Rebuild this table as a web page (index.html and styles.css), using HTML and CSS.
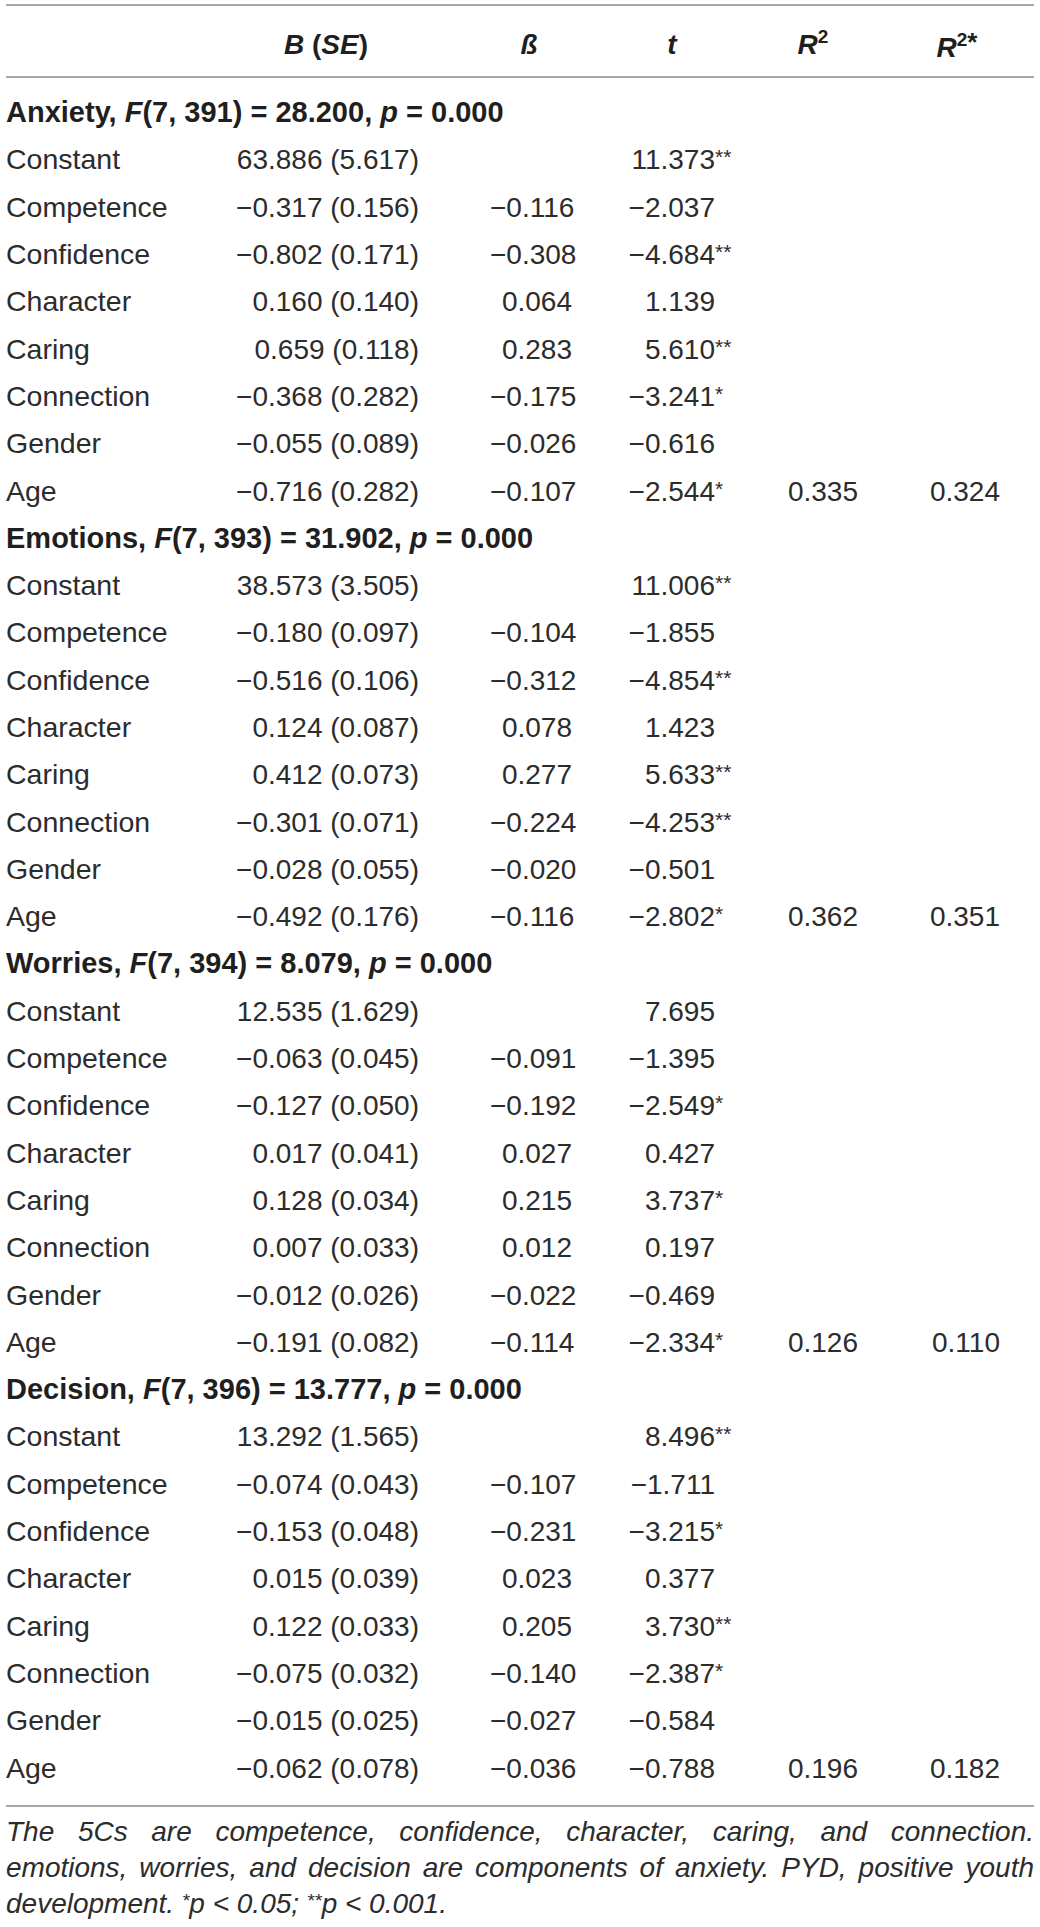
FILE: index.html
```html
<!DOCTYPE html>
<html lang="en">
<head>
  <meta charset="UTF-8" />
  <title>Regression – anxiety and the 5Cs</title>
  <link rel="stylesheet" href="styles.css">
</head>
<body>

  <div class="page">
    <!-- Tabla -->
    <div class="table-box">
      <table class="reg">
        <colgroup>
          <col class="c-label"><col class="c-b"><col class="c-beta"><col class="c-t"><col class="c-r2"><col class="c-r2a">
        </colgroup>
        <thead>
          <tr>
            <th></th>
            <th class="h-b"><i>B</i> (<i>SE</i>)</th>
            <th class="h-beta"><i>ß</i></th>
            <th class="h-t"><i>t</i></th>
            <th class="h-r2"><i>R</i><sup>2</sup></th>
            <th class="h-r2a"><i>R</i><sup>2</sup><span class="star">*</span></th>
          </tr>
        </thead>

        <!-- Anxiety -->
        <tbody>
          <tr class="sec"><td colspan="6">Anxiety, <i>F</i>(7, 391) = 28.200, <i>p</i> = 0.000</td></tr>
          <tr><td>Constant</td><td class="b">63.886 (5.617)</td><td class="beta"></td><td class="t">11.373<span class="sig">**</span></td><td></td><td></td></tr>
          <tr><td>Competence</td><td class="b">−0.317 (0.156)</td><td class="beta">−0.116</td><td class="t">−2.037<span class="sig"></span></td><td></td><td></td></tr>
          <tr><td>Confidence</td><td class="b">−0.802 (0.171)</td><td class="beta">−0.308</td><td class="t">−4.684<span class="sig">**</span></td><td></td><td></td></tr>
          <tr><td>Character</td><td class="b">0.160 (0.140)</td><td class="beta">0.064</td><td class="t">1.139<span class="sig"></span></td><td></td><td></td></tr>
          <tr><td>Caring</td><td class="b">0.659 (0.118)</td><td class="beta">0.283</td><td class="t">5.610<span class="sig">**</span></td><td></td><td></td></tr>
          <tr><td>Connection</td><td class="b">−0.368 (0.282)</td><td class="beta">−0.175</td><td class="t">−3.241<span class="sig">*</span></td><td></td><td></td></tr>
          <tr><td>Gender</td><td class="b">−0.055 (0.089)</td><td class="beta">−0.026</td><td class="t">−0.616<span class="sig"></span></td><td></td><td></td></tr>
          <tr><td>Age</td><td class="b">−0.716 (0.282)</td><td class="beta">−0.107</td><td class="t">−2.544<span class="sig">*</span></td><td class="r2">0.335</td><td class="r2a">0.324</td></tr>
        </tbody>

        <!-- Emotions -->
        <tbody>
          <tr class="sec"><td colspan="6">Emotions, <i>F</i>(7, 393) = 31.902, <i>p</i> = 0.000</td></tr>
          <tr><td>Constant</td><td class="b">38.573 (3.505)</td><td class="beta"></td><td class="t">11.006<span class="sig">**</span></td><td></td><td></td></tr>
          <tr><td>Competence</td><td class="b">−0.180 (0.097)</td><td class="beta">−0.104</td><td class="t">−1.855<span class="sig"></span></td><td></td><td></td></tr>
          <tr><td>Confidence</td><td class="b">−0.516 (0.106)</td><td class="beta">−0.312</td><td class="t">−4.854<span class="sig">**</span></td><td></td><td></td></tr>
          <tr><td>Character</td><td class="b">0.124 (0.087)</td><td class="beta">0.078</td><td class="t">1.423<span class="sig"></span></td><td></td><td></td></tr>
          <tr><td>Caring</td><td class="b">0.412 (0.073)</td><td class="beta">0.277</td><td class="t">5.633<span class="sig">**</span></td><td></td><td></td></tr>
          <tr><td>Connection</td><td class="b">−0.301 (0.071)</td><td class="beta">−0.224</td><td class="t">−4.253<span class="sig">**</span></td><td></td><td></td></tr>
          <tr><td>Gender</td><td class="b">−0.028 (0.055)</td><td class="beta">−0.020</td><td class="t">−0.501<span class="sig"></span></td><td></td><td></td></tr>
          <tr><td>Age</td><td class="b">−0.492 (0.176)</td><td class="beta">−0.116</td><td class="t">−2.802<span class="sig">*</span></td><td class="r2">0.362</td><td class="r2a">0.351</td></tr>
        </tbody>

        <!-- Worries -->
        <tbody>
          <tr class="sec"><td colspan="6">Worries, <i>F</i>(7, 394) = 8.079, <i>p</i> = 0.000</td></tr>
          <tr><td>Constant</td><td class="b">12.535 (1.629)</td><td class="beta"></td><td class="t">7.695<span class="sig"></span></td><td></td><td></td></tr>
          <tr><td>Competence</td><td class="b">−0.063 (0.045)</td><td class="beta">−0.091</td><td class="t">−1.395<span class="sig"></span></td><td></td><td></td></tr>
          <tr><td>Confidence</td><td class="b">−0.127 (0.050)</td><td class="beta">−0.192</td><td class="t">−2.549<span class="sig">*</span></td><td></td><td></td></tr>
          <tr><td>Character</td><td class="b">0.017 (0.041)</td><td class="beta">0.027</td><td class="t">0.427<span class="sig"></span></td><td></td><td></td></tr>
          <tr><td>Caring</td><td class="b">0.128 (0.034)</td><td class="beta">0.215</td><td class="t">3.737<span class="sig">*</span></td><td></td><td></td></tr>
          <tr><td>Connection</td><td class="b">0.007 (0.033)</td><td class="beta">0.012</td><td class="t">0.197<span class="sig"></span></td><td></td><td></td></tr>
          <tr><td>Gender</td><td class="b">−0.012 (0.026)</td><td class="beta">−0.022</td><td class="t">−0.469<span class="sig"></span></td><td></td><td></td></tr>
          <tr><td>Age</td><td class="b">−0.191 (0.082)</td><td class="beta">−0.114</td><td class="t">−2.334<span class="sig">*</span></td><td class="r2">0.126</td><td class="r2a">0.110</td></tr>
        </tbody>

        <!-- Decision -->
        <tbody>
          <tr class="sec"><td colspan="6">Decision, <i>F</i>(7, 396) = 13.777, <i>p</i> = 0.000</td></tr>
          <tr><td>Constant</td><td class="b">13.292 (1.565)</td><td class="beta"></td><td class="t">8.496<span class="sig">**</span></td><td></td><td></td></tr>
          <tr><td>Competence</td><td class="b">−0.074 (0.043)</td><td class="beta">−0.107</td><td class="t">−1.711<span class="sig"></span></td><td></td><td></td></tr>
          <tr><td>Confidence</td><td class="b">−0.153 (0.048)</td><td class="beta">−0.231</td><td class="t">−3.215<span class="sig">*</span></td><td></td><td></td></tr>
          <tr><td>Character</td><td class="b">0.015 (0.039)</td><td class="beta">0.023</td><td class="t">0.377<span class="sig"></span></td><td></td><td></td></tr>
          <tr><td>Caring</td><td class="b">0.122 (0.033)</td><td class="beta">0.205</td><td class="t">3.730<span class="sig">**</span></td><td></td><td></td></tr>
          <tr><td>Connection</td><td class="b">−0.075 (0.032)</td><td class="beta">−0.140</td><td class="t">−2.387<span class="sig">*</span></td><td></td><td></td></tr>
          <tr><td>Gender</td><td class="b">−0.015 (0.025)</td><td class="beta">−0.027</td><td class="t">−0.584<span class="sig"></span></td><td></td><td></td></tr>
          <tr><td>Age</td><td class="b">−0.062 (0.078)</td><td class="beta">−0.036</td><td class="t">−0.788<span class="sig"></span></td><td class="r2">0.196</td><td class="r2a">0.182</td></tr>
        </tbody>
      </table>
    </div>

    <!-- Nota -->
    <div class="note">
      <span class="line">The 5Cs are competence, confidence, character, caring, and connection.</span>
      <span class="line">emotions, worries, and decision are components of anxiety. PYD, positive youth</span>
      <span class="line last">development. <span class="sig-note">*</span>p &lt; 0.05; <span class="sig-note">**</span>p &lt; 0.001.</span>
    </div>
  </div>

</body>
</html>
```

FILE: styles.css
```css
body {
  margin: 0;
  background: #fff;
  color: #2c2c2c;
  font-family: "Liberation Sans", Arial, sans-serif;
}

.page {
  padding: 4px 6px 0 6px;
}

.table-box {
  border-top: 2px solid #a8a8a8;
  border-bottom: 2px solid #a8a8a8;
  padding-bottom: 13px;
}

.reg {
  width: 100%;
  border-collapse: collapse;
  table-layout: fixed;
  font-size: 28px;
}

.c-label { width: 219px; }
.c-b { width: 265px; }
.c-beta { width: 105px; }
.c-t { width: 165px; }
.c-r2 { width: 150px; }
.c-r2a { width: 124px; }

th, td {
  padding: 0;
  line-height: 31px;
  vertical-align: middle;
  white-space: nowrap;
}

/* Cabecera */
thead th {
  height: 63px;
  padding-top: 7px;
  font-weight: bold;
  color: #1f1f1f;
  text-align: center;
  border-bottom: 2px solid #a8a8a8;
}

thead sup {
  font-size: 19px;
  font-style: normal;
  vertical-align: 11px;
  line-height: 0;
}

thead .star {
  font-size: 26px;
  vertical-align: 6px;
}

.h-b { padding-right: 63px; }
.h-beta { padding-right: 27px; }
.h-t { padding-right: 11px; }
.h-r2 { padding-right: 44px; }
.h-r2a { padding-right: 30px; }

/* Filas */
tbody td {
  height: 47.3px;
}

tbody td:first-child {
  font-size: 28.5px;
}

tbody:first-of-type tr:first-child td {
  padding-top: 11px;
}

.sec td,
tbody .sec td:first-child {
  font-size: 29px;
  font-weight: bold;
  color: #1f1f1f;
}

.b { text-align: right; padding-right: 71px; }
.beta { text-align: right; padding-right: 23px; }
.t { text-align: right; padding-right: 25px; }
.r2 { text-align: right; padding-right: 52px; }
.r2a { text-align: right; padding-right: 34px; }

.sig {
  display: inline-block;
  width: 20px;
  text-align: left;
  font-size: 21px;
  vertical-align: 5px;
  line-height: 0;
}

/* Nota */
.note {
  padding-top: 7px;
  font-size: 28px;
  font-style: italic;
  line-height: 36px;
  color: #2c2c2c;
}

.note .line {
  display: block;
  text-align: justify;
  text-align-last: justify;
}

.note .line.last {
  text-align-last: left;
}

.sig-note {
  font-size: 19px;
  vertical-align: 6px;
  line-height: 0;
}
```
